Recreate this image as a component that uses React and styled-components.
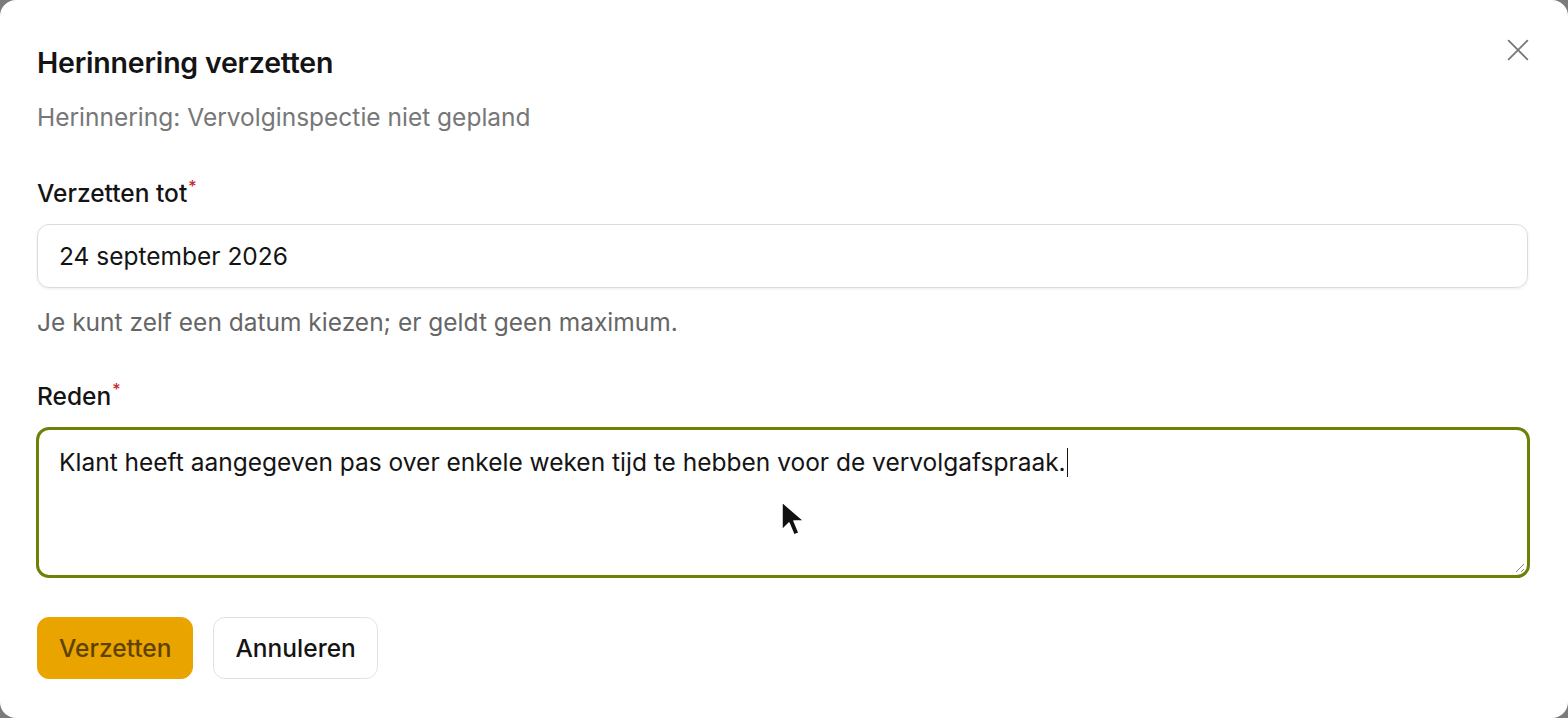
import React from "react";
import styled, { createGlobalStyle } from "styled-components";

const GlobalStyle = createGlobalStyle`
  html, body {
    margin: 0;
    padding: 0;
    background: #7b7b7b;
    font-family: Inter, "Noto Sans", sans-serif;
  }
`;

const Dialog = styled.div`
  position: relative;
  box-sizing: border-box;
  width: 1568px;
  height: 718px;
  background: #fff;
  border-radius: 16px;
  padding: 44px 40px 0 37px;
  color: #141414;
`;

const CloseButton = styled.button`
  position: absolute;
  top: 34px;
  right: 34px;
  width: 32px;
  height: 32px;
  padding: 0;
  border: none;
  background: none;
  color: #777;
  display: flex;
  align-items: center;
  justify-content: center;
  cursor: pointer;
`;

const Title = styled.h2`
  margin: 0;
  font-size: 28.5px;
  font-weight: 600;
  line-height: 38px;
  letter-spacing: -0.2px;
`;

const Subtitle = styled.p`
  margin: 20px 0 0;
  font-size: 24.5px;
  line-height: 30px;
  color: #777;
`;

const Field = styled.div`
  margin-top: ${(p) => p.$top}px;
  display: flex;
  flex-direction: column;
`;

const Label = styled.label`
  font-size: 24.5px;
  font-weight: 500;
  line-height: 30px;
  color: #141414;
`;

const Required = styled.sup`
  color: #c62828;
  font-size: 16px;
  line-height: 0;
  margin-left: 1px;
  position: relative;
  top: -1px;
`;

const Input = styled.div`
  box-sizing: border-box;
  margin-top: 16px;
  height: 64px;
  border: 1px solid #dcdcdc;
  border-radius: 12px;
  box-shadow: 0 1px 3px rgba(0, 0, 0, 0.08);
  display: flex;
  align-items: center;
  padding: 0 21px;
  font-size: 24.5px;
  color: #141414;
`;

const Help = styled.p`
  margin: 20px 0 0;
  font-size: 24.5px;
  line-height: 28px;
  color: #666;
`;

const TextArea = styled.div`
  position: relative;
  box-sizing: border-box;
  margin-top: 16px;
  margin-left: -1px;
  margin-right: -2px;
  height: 151px;
  border: 3px solid #6a8208;
  border-radius: 13px;
  padding: 17px 20px;
  font-size: 24.5px;
  line-height: 30px;
  color: #141414;
`;

const Caret = styled.span`
  display: inline-block;
  width: 1.5px;
  height: 29px;
  margin-left: 1px;
  background: #141414;
  vertical-align: -6px;
`;

const Grip = styled.svg`
  position: absolute;
  right: 2px;
  bottom: 2px;
`;

const Actions = styled.div`
  margin-top: 39px;
  display: flex;
  gap: 20px;
`;

const Button = styled.button`
  box-sizing: border-box;
  height: 62px;
  padding: 0 ${(p) => (p.$primary ? 21 : 21)}px;
  border-radius: 12px;
  font-family: inherit;
  font-size: 24.5px;
  font-weight: 500;
  border: 1px solid ${(p) => (p.$primary ? "#eaa400" : "#e2e2e2")};
  background: ${(p) => (p.$primary ? "#eaa400" : "#fff")};
  color: ${(p) => (p.$primary ? "#5e4300" : "#141414")};
  cursor: pointer;
`;

const Pointer = styled.svg`
  position: absolute;
  left: 780px;
  top: 500px;
`;

export default function App() {
  return (
    <>
      <GlobalStyle />
      <Dialog>
        <CloseButton aria-label="Sluiten">
          <svg width="28" height="28" viewBox="0 0 24 24" fill="none" stroke="currentColor" strokeWidth="1.6" strokeLinecap="round">
            <path d="M4 4l16 16M20 4L4 20" />
          </svg>
        </CloseButton>
        <Title>Herinnering verzetten</Title>
        <Subtitle>Herinnering: Vervolginspectie niet gepland</Subtitle>

        <Field $top={46}>
          <Label>
            Verzetten tot<Required>*</Required>
          </Label>
          <Input>24 september 2026</Input>
          <Help>Je kunt zelf een datum kiezen; er geldt geen maximum.</Help>
        </Field>

        <Field $top={45}>
          <Label>
            Reden<Required>*</Required>
          </Label>
          <TextArea>
            Klant heeft aangegeven pas over enkele weken tijd te hebben voor de vervolgafspraak.
            <Caret />
            <Grip width="12" height="12" viewBox="0 0 12 12">
              <path d="M11 3L3 11M11 8L8 11" stroke="#888" strokeWidth="1" />
            </Grip>
          </TextArea>
        </Field>

        <Actions>
          <Button $primary>Verzetten</Button>
          <Button>Annuleren</Button>
        </Actions>

        <Pointer width="28" height="42" viewBox="0 0 28 42">
          <path d="M2 2 L2 30 L9 23 L14 35 L19 33 L14 21 L24 21 Z" fill="#111" stroke="#fff" strokeWidth="1.5" strokeLinejoin="round" />
        </Pointer>
      </Dialog>
    </>
  );
}
